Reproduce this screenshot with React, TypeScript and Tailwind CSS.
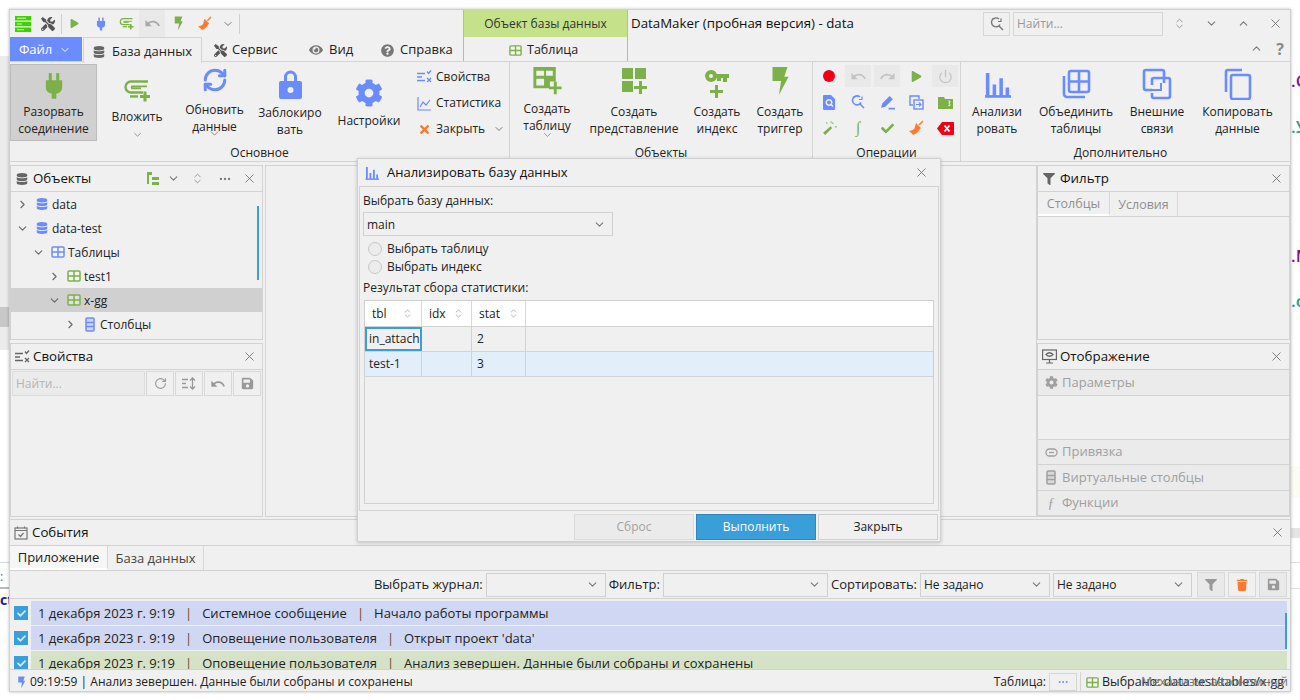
import type { ReactNode } from "react";
import { ChevronDown, ChevronRight, ChevronUp, ChevronsUpDown, MoreHorizontal, Power, RefreshCw, RotateCw, X } from "lucide-react";
import { MdRedo, MdUndo } from "react-icons/md";
import { FaCheck, FaCog, FaDatabase, FaEye, FaFilter, FaPlay, FaQuestionCircle, FaSave, FaTimes, FaTools, FaTrash } from "react-icons/fa";

const BLUE = "#6b8cff";
const GREEN = "#7cb049";
const ORANGE = "#ff7a2f";

function Plug({ size = 24, color = GREEN }: { size?: number; color?: string }) {
  return (
    <svg width={size} height={size} viewBox="0 0 24 24" fill={color}>
      <rect x="7.5" y="1" width="2.6" height="7" />
      <rect x="13.9" y="1" width="2.6" height="7" />
      <path d="M5 7h14v6c0 3-2 5-5 5.500V23h-4v-4.500C7 18 5 16 5 13z" />
    </svg>
  );
}

function Attach({ size = 28, color = GREEN }: { size?: number; color?: string }) {
  return (
    <svg width={size} height={size} viewBox="0 0 28 24" fill="none" stroke={color} strokeWidth="2.4">
      <path d="M25 3H8a5 5 0 0 0 0 11h12" />
      <path d="M24 8H9a1.500 1.500 0 0 0 0 2h9" strokeWidth="1.800" />
      <path d="M7 18h8" />
      <path d="M22 13v10M17 18h10" strokeWidth="3" />
    </svg>
  );
}

function Grid2({ size = 14, color = GREEN }: { size?: number; color?: string }) {
  return (
    <svg width={size} height={size} viewBox="0 0 14 14" fill="none" stroke={color} strokeWidth="1.500">
      <rect x="1" y="2" width="12" height="10" rx="1" fill="#fff" fillOpacity="0.35" />
      <path d="M1 7h12M7 2v10" />
    </svg>
  );
}

function TablePlus({ size = 32 }: { size?: number }) {
  return (
    <svg width={size} height={size} viewBox="0 0 30 30" fill={GREEN}>
      <path fillRule="evenodd" d="M1 1h23v15h-6v7H1zM4 5v5h8V5zm10 0v5h7V5zM4 13v7h8v-7z" />
      <path d="M22 16h3v5h5v3h-5v5h-3v-5h-5v-3h5z" />
    </svg>
  );
}

function ViewPlus({ size = 28 }: { size?: number }) {
  return (
    <svg width={size} height={size} viewBox="0 0 28 28" fill={GREEN}>
      <rect x="2" y="2" width="11" height="11" />
      <rect x="15" y="2" width="11" height="11" />
      <rect x="2" y="15" width="11" height="11" />
      <path d="M19 15h3v5h5v3h-5v5h-3v-5h-5v-3h5z" />
    </svg>
  );
}

function KeyPlus() {
  return (
    <svg width="26" height="30" viewBox="0 0 26 30" fill={GREEN}>
      <path fillRule="evenodd" d="M7 2a6 6 0 0 1 5.700 4H25v4h-2v4h-4v-4h-2v3h-4v-3h-.3A6 6 0 1 1 7 2zm0 4a2 2 0 1 0 0 4 2 2 0 0 0 0-4z" />
      <path d="M11 17h3v5h5v3h-5v5h-3v-5H6v-3h5z" />
    </svg>
  );
}

function Bolt({ size = 28, color = GREEN }: { size?: number; color?: string }) {
  return (
    <svg width={size} height={size} viewBox="0 0 20 28" fill={color}>
      <path d="M3 1h14l-3 9h4L9 27l2-13H3z" />
    </svg>
  );
}

function Broom({ size = 16 }: { size?: number }) {
  return (
    <svg width={size} height={size} viewBox="0 0 16 16" fill={ORANGE}>
      <path d="M11 5L15 1" stroke={ORANGE} strokeWidth="1.500" />
      <path d="M8 3l5 5-1.500 1.500c-1 2-3 4-6 5.500L1 11c2 0 4-1 5.500-2.500z" />
    </svg>
  );
}

function PropsIcon({ color = BLUE, size = 16 }: { color?: string; size?: number }) {
  return (
    <svg width={size} height={size} viewBox="0 0 16 16" fill="none" stroke={color} strokeWidth="1.300">
      <path d="M1 4.500h8M1 8h5M1 11.500h8" />
      <path d="M11 2.500l1.500 2 2.500-3M11 9l4 4M15 9l-4 4" />
    </svg>
  );
}

function StatsIcon() {
  return (
    <svg width="15" height="15" viewBox="0 0 15 15" fill="none" stroke={BLUE} strokeWidth="1.200">
      <path d="M1 1v13h13" />
      <path d="M3 11l3-5 3 3 4-5" />
    </svg>
  );
}

function Bars({ size = 26 }: { size?: number }) {
  return (
    <svg width={size} height={size} viewBox="0 0 26 26" fill="none" stroke={BLUE} strokeWidth="3.400">
      <path d="M1 24.500h25" strokeWidth="2.600" />
      <path d="M3.500 24V2M10 24V13M16.500 24V7M22.500 24V16" />
    </svg>
  );
}

function Merge() {
  return (
    <svg width="30" height="30" viewBox="0 0 30 30" fill="none" stroke={BLUE} strokeWidth="2.600">
      <path d="M3 7v18a3 3 0 0 0 3 3h18" />
      <rect x="8" y="2" width="20" height="21" rx="2" />
      <path d="M8 12.500h20M18 2v21" />
    </svg>
  );
}

function Links() {
  return (
    <svg width="30" height="32" viewBox="0 0 30 32" fill="none" stroke={BLUE} strokeWidth="2.600">
      <path d="M22 15V4a2 2 0 0 0-2-2H4a2 2 0 0 0-2 2v16a2 2 0 0 0 2 2h6" />
      <path d="M10 17v-5a2 2 0 0 1 2-2h14a2 2 0 0 1 2 2v16a2 2 0 0 1-2 2H12a2 2 0 0 1-2-2v-3" />
      <path d="M10 22h9v-7" strokeWidth="2" />
    </svg>
  );
}

function CopyIcon() {
  return (
    <svg width="28" height="32" viewBox="0 0 28 32" fill="none" stroke={BLUE} strokeWidth="2.600">
      <path d="M2 24V4a2 2 0 0 1 2-2h14" />
      <rect x="7" y="7" width="19" height="24" rx="2" />
    </svg>
  );
}

function LockIcon() {
  return (
    <svg width="23" height="30" viewBox="0 0 23 30" fill={BLUE}>
      <path d="M5 12V8a6.500 6.500 0 0 1 13 0v4h-3V8a3.500 3.500 0 0 0-7 0v4z" />
      <path fillRule="evenodd" d="M2 12h19a2 2 0 0 1 2 2v14a2 2 0 0 1-2 2H2a2 2 0 0 1-2-2V14a2 2 0 0 1 2-2zm9.500 6a3 3 0 1 0 0 6 3 3 0 0 0 0-6z" />
    </svg>
  );
}

function ColumnsIcon({ color = BLUE }: { color?: string }) {
  return (
    <svg width="10" height="15" viewBox="0 0 10 15" fill="none" stroke={color} strokeWidth="1.500">
      <rect x="1" y="1" width="8" height="13" rx="1" fill={color} fillOpacity="0.25" />
      <path d="M1 5.500h8M1 9.500h8" />
    </svg>
  );
}

function RBtn({ w, pt, mt, icon, lines, chevron, active }: { w: string; pt: string; mt: string; icon: ReactNode; lines: string[]; chevron?: string; active?: boolean }) {
  return (
    <div className={`${w} ${pt} h-[77px] shrink-0 flex flex-col items-center text-center ${active ? "bg-[#d0d0d0] border border-[#bcbcbc]" : ""}`}>
      {icon}
      <div className={`${mt} leading-[16.500px]`}>
        {lines.map((l) => (
          <div key={l}>{l}</div>
        ))}
      </div>
      {chevron && <ChevronDown size={13} strokeWidth={1.500} className={`${chevron} text-[#777]`} />}
    </div>
  );
}

function RGroup({ w, label, children, last }: { w: string; label: string; children: ReactNode; last?: boolean }) {
  return (
    <div className={`${w} shrink-0 h-full flex flex-col ${last ? "" : "border-r border-[#d4d4d4]"}`}>
      <div className="flex h-[84px] pt-[2px]">{children}</div>
      <div className="text-center leading-[16px]">{label}</div>
    </div>
  );
}

function SmallAction({ icon, label, chevron }: { icon: ReactNode; label: string; chevron?: boolean }) {
  return (
    <div className="h-[26px] flex items-center">
      <span className="w-[20px] flex justify-center">{icon}</span>
      <span className="ml-[2px]">{label}</span>
      {chevron && <ChevronDown size={12} className="ml-[8px] text-[#777]" />}
    </div>
  );
}

function OpIcon({ children, shaded }: { children: ReactNode; shaded?: boolean }) {
  return <div className={`w-[26px] h-[22px] flex items-center justify-center ${shaded ? "bg-[#e9e9e9]" : ""}`}>{children}</div>;
}

function PanelHead({ icon, title }: { icon: ReactNode; title: string }) {
  return (
    <div className="h-[26px] shrink-0 flex items-center border-b border-[#d2d2d2] pl-[3px] pr-[5px]">
      <span className="w-[16px] flex justify-center">{icon}</span>
      <span className="ml-[3px] text-[13.300px] text-[#111]">{title}</span>
      <X size={15} strokeWidth={1.300} className="ml-auto text-[#666]" />
    </div>
  );
}

function TreeRow({ indent, open, icon, label, selected }: { indent: string; open: boolean; icon: ReactNode; label: string; selected?: boolean }) {
  return (
    <div className={`h-[24px] flex items-center ${indent} ${selected ? "bg-[#d0d0d0]" : ""}`}>
      {open ? <ChevronDown size={13} className="text-[#666]" /> : <ChevronRight size={13} className="text-[#666]" />}
      <span className="ml-[5px] w-[16px] flex justify-center">{icon}</span>
      <span className="ml-[2px] pt-[2px]">{label}</span>
    </div>
  );
}

function ToolBtn({ children, tinted }: { children: ReactNode; tinted?: boolean }) {
  return <div className={`w-[28px] h-[25px] border border-[#d8d8d8] flex items-center justify-center ${tinted ? "bg-[#e9e9e9]" : ""}`}>{children}</div>;
}

function Select({ w, value }: { w: string; value?: string }) {
  return (
    <div className={`${w} h-[24px] shrink-0 border border-[#d0d0d0] flex items-center pl-[3px] pr-[6px]`}>
      <span className="pt-[1px]">{value}</span>
      <ChevronDown size={13} className="ml-auto text-[#777]" />
    </div>
  );
}

function AccordionRow({ icon, label, h }: { icon: ReactNode; label: string; h: string }) {
  return (
    <div className={`${h} bg-[#ebebeb] border-b border-[#d2d2d2] flex items-center pl-[5px] text-[13px] text-[#a0a0a0]`}>
      <span className="w-[16px] flex justify-center">{icon}</span>
      <span className="ml-[3px]">{label}</span>
    </div>
  );
}

function EventRow({ date, kind, text, bg, clip }: { date: string; kind: string; text: string; bg: string; clip?: boolean }) {
  return (
    <div className={`flex ${clip ? "h-[19px]" : "h-[24px] mb-[1px]"} overflow-hidden`}>
      <div className="w-[21px] shrink-0 pl-[4px] pt-[5px]">
        <div className="w-[14px] h-[14px] bg-[#3a9ed9] flex items-center justify-center">
          <FaCheck size={9} color="#cfe8f7" />
        </div>
      </div>
      <div className={`flex-1 ${bg} flex items-start pt-[3px] pl-[7px] leading-[18px] text-[13px]`}>
        <span>{date}</span>
        <span className="mx-[10px] text-[#6b4a1f]">|</span>
        <span>{kind}</span>
        <span className="mx-[10px] text-[#6b4a1f]">|</span>
        <span>{text}</span>
      </div>
    </div>
  );
}

function Radio({ label }: { label: string }) {
  return (
    <div className="h-[18px] flex items-center pl-[5px]">
      <span className="w-[14px] h-[14px] rounded-full border border-[#c8c8c8] bg-[#ececec]" />
      <span className="ml-[5px]">{label}</span>
    </div>
  );
}

function SortHead({ w, label, gap }: { w: string; label: string; gap: string }) {
  return (
    <div className={`${w} h-full shrink-0 border-r border-[#d8d8d8] flex items-center pl-[7px]`}>
      <span>{label}</span>
      <ChevronsUpDown size={11} strokeWidth={1.300} className={`${gap} text-[#888]`} />
    </div>
  );
}

function ResultRow({ first, stat, bg, focus }: { first: string; stat: string; bg: string; focus?: boolean }) {
  return (
    <div className={`h-[25px] flex border-b border-[#d0d4da] ${bg}`}>
      <div className={`w-[57px] shrink-0 flex items-center overflow-hidden whitespace-nowrap ${focus ? "border-2 border-[#3a9ed9] pl-[2px]" : "border-r border-[#d0d4da] pl-[4px]"}`}>{first}</div>
      <div className="w-[50px] shrink-0 border-r border-[#d0d4da]" />
      <div className="w-[54px] shrink-0 border-r border-[#d0d4da] flex items-center pl-[5px]">{stat}</div>
    </div>
  );
}

function Dialog() {
  return (
    <div className="absolute left-[357px] top-[158px] w-[584px] h-[384px] bg-[#f0f0f0] border border-[#d0d0d0] shadow-[0_1px_4px_rgba(0,0,0,0.2)] flex flex-col">
      <div className="h-[27px] shrink-0 flex items-center pl-[7px] pr-[11px] text-[#111]">
        <Bars size={14} />
        <span className="ml-[8px] text-[13px]">Анализировать базу данных</span>
        <X size={15} strokeWidth={1.300} className="ml-auto text-[#666]" />
      </div>
      <div className="h-[325px] mx-[1px] border border-[#d2d2d2] px-[3px] pt-[4px]">
        <div className="h-[21px] leading-[20px]">Выбрать базу данных:</div>
        <Select w="w-[250px]" value="main" />
        <div className="mt-[4px]">
          <Radio label="Выбрать таблицу" />
          <Radio label="Выбрать индекс" />
        </div>
        <div className="h-[21px] mt-[1px] leading-[21px]">Результат сбора статистики:</div>
        <div className="h-[204px] ml-[1px] mt-[2px] w-[570px] border border-[#d0d0d0]">
          <div className="h-[26px] bg-white flex border-b border-[#d0d0d0]">
            <SortHead w="w-[57px]" label="tbl" gap="ml-[15px]" />
            <SortHead w="w-[50px]" label="idx" gap="ml-[7px]" />
            <SortHead w="w-[54px]" label="stat" gap="ml-[8px]" />
          </div>
          <ResultRow first="in_attach" stat="2" bg="bg-[#f0f0f0]" focus />
          <ResultRow first="test-1" stat="3" bg="bg-[#e2eefa]" />
        </div>
      </div>
      <div className="flex-1 flex justify-end items-center gap-[2px] pr-[2px] pt-[2px]">
        <div className="w-[120px] h-[26px] bg-[#ebebeb] border border-[#dcdcdc] flex items-center justify-center text-[#a3a3a3]">Сброс</div>
        <div className="w-[120px] h-[26px] bg-[#3a9ed9] border border-[#2f86bb] flex items-center justify-center text-white">Выполнить</div>
        <div className="w-[120px] h-[26px] border border-[#d0d0d0] flex items-center justify-center">Закрыть</div>
      </div>
    </div>
  );
}

export default function App() {
  return (
    <div className="relative w-[1300px] h-[700px] bg-white overflow-hidden text-[12px] text-[#222] font-['Open_Sans','Liberation_Sans',sans-serif]">
      {/* what shows behind the app window */}
      <div className="absolute left-0 top-[56px] w-[9px] h-[294px] bg-[#ececec]" />
      <div className="absolute left-0 top-[307px] w-[9px] h-[20px] bg-[#c8c8c8]" />
      <div className="absolute left-0 top-[562px] w-[9px] h-[1px] bg-[#d8d8d8]" />
      <div className="absolute left-0 top-[570px] text-[12px] leading-[14px] text-[#3a6fd8]">:</div>
      <div className="absolute left-0 top-[587px] w-[9px] h-[2px] bg-[#b8b8c0]" />
      <div className="absolute left-0 top-[592px] text-[14px] leading-[16px] font-bold text-[#23238c]">ct</div>
      <div className="absolute left-[1291px] top-[72px] text-[17px] leading-[18px] font-semibold text-[#8a0f9e]">.C</div>
      <div className="absolute left-[1291px] top-[118px] text-[17px] leading-[18px] font-semibold text-[#12a596]">.У</div>
      <div className="absolute left-[1291px] top-[247px] text-[17px] leading-[18px] font-semibold text-[#8a0f9e]">.M</div>
      <div className="absolute left-[1291px] top-[292px] text-[17px] leading-[18px] font-semibold text-[#12a596]">.c</div>
      <div className="absolute left-[1291px] top-[466px] w-[9px] h-[32px] bg-[#fdfcf2]" />
      <div className="absolute left-[1291px] top-[528px] w-[9px] h-[10px] bg-[#e4e4e4]" />
      <div className="absolute left-[1291px] top-[562px] w-[9px] h-[1px] bg-[#e0e0e0]" />
      <div className="absolute left-[1291px] top-[588px] w-[9px] h-[1px] bg-[#e0e0e0]" />

      <div className="absolute left-[9px] top-[9px] w-[1282px] h-[683px] bg-[#f0f0f0] border border-[#d0d0d0] shadow-[0_0_3px_rgba(0,0,0,0.25)] flex flex-col">
        {/* title row */}
        <div className="h-[27px] shrink-0 flex items-center">
          <div className="w-[453px] flex items-center pl-[5px]">
            <svg width="16" height="16" viewBox="0 0 16 16" fill="#3fd000">
              <rect x="0" y="0" width="16" height="4.500" />
              <rect x="0" y="5.700" width="16" height="4.500" />
              <rect x="0" y="11.500" width="16" height="4.500" />
              <path d="M2 2.200h9M2 8h5M2 13.700h7" stroke="#d6f7c4" strokeWidth="1" />
            </svg>
            <FaTools size={14} color="#555" className="ml-[10px]" />
            <span className="ml-[6px] w-px h-[20px] bg-[#cfcfcf]" />
            <FaPlay size={9} color={GREEN} className="ml-[8px]" />
            <span className="ml-[15px]"><Plug size={14} color={BLUE} /></span>
            <span className="ml-[11px]"><Attach size={15} /></span>
            <span className="ml-[5px] w-[26px] h-[27px] bg-[#e9e9e9] flex items-center justify-center"><MdUndo size={17} color="#a8a8a8" /></span>
            <span className="ml-[6px]"><Bolt size={15} /></span>
            <span className="ml-[11px]"><Broom size={15} /></span>
            <ChevronDown size={12} className="ml-[10px] text-[#777]" />
            <span className="ml-[5px] w-px h-[20px] bg-[#cfcfcf]" />
          </div>
          <div className="w-[165px] h-full bg-[#c5e18a] border-x border-[#a4d35c] flex items-center justify-center text-[#333]">Объект базы данных</div>
          <div className="ml-[3px] w-[352px] text-[13.300px] text-[#111]">DataMaker (пробная версия) - data</div>
          <div className="w-[27px] h-[24px] border border-[#d6d6d6] flex items-center justify-center">
            <svg width="14" height="14" viewBox="0 0 14 14" fill="none" stroke="#777" strokeWidth="1.400">
              <path d="M9 2a4.500 4.500 0 1 0 1 5.500M2 2.500a4 4 0 0 1 3-1M9 9l4 4" />
              <path d="M8 4.500h3v-3" strokeWidth="1.200" />
            </svg>
          </div>
          <div className="ml-[3px] w-[150px] h-[24px] border border-[#d6d6d6] flex items-center pl-[3px] text-[#999]">Найти...</div>
          <ChevronsUpDown size={13} strokeWidth={1.300} className="ml-[10px] text-[#777]" />
          <ChevronDown size={13} className="ml-[19px] text-[#777]" />
          <ChevronUp size={13} className="ml-[19px] text-[#777]" />
          <X size={15} strokeWidth={1.300} className="ml-[18px] text-[#666]" />
        </div>

        {/* ribbon tabs */}
        <div className="h-[25px] shrink-0 flex items-stretch border-b border-[#d4d4d4] text-[13px]">
          <div className="w-[72px] bg-[#6b8cff] flex items-center pl-[9px] pt-[2px] text-white">
            Файл
            <ChevronDown size={12} className="ml-[7px]" />
          </div>
          <div className="ml-[1px] w-[119px] h-[26px] bg-[#f0f0f0] border border-b-0 border-[#d4d4d4] flex items-center pl-[9px] pt-[2px]">
            <FaDatabase size={12} color="#666" />
            <span className="ml-[7px]">База данных</span>
          </div>
          <div className="w-[96px] flex items-center pl-[12px] pt-[2px]">
            <FaTools size={13} color="#555" />
            <span className="ml-[5px]">Сервис</span>
          </div>
          <div className="w-[72px] flex items-center pl-[11px] pt-[2px]">
            <FaEye size={14} color="#777" />
            <span className="ml-[6px]">Вид</span>
          </div>
          <div className="w-[93px] flex items-center pl-[11px] pt-[2px]">
            <FaQuestionCircle size={13} color="#777" />
            <span className="ml-[6px]">Справка</span>
          </div>
          <div className="w-[165px] border-x border-[#a4d35c] flex items-center pl-[45px] pt-[2px] text-[12.500px]">
            <Grid2 size={13} />
            <span className="ml-[5px]">Таблица</span>
          </div>
          <ChevronUp size={13} className="ml-auto mt-[5px] text-[#777]" />
          <span className="ml-[13px] mr-[6px] mt-[1px] text-[16px] leading-[22px] font-bold text-[#8a8a8a]">?</span>
        </div>

        {/* ribbon */}
        <div className="h-[100px] shrink-0 flex items-stretch border-b border-[#d4d4d4]">
          <RGroup w="w-[500px]" label="Основное">
            <RBtn w="w-[87px]" pt="pt-[7px]" mt="mt-[4px]" active icon={<Plug size={28} />} lines={["Разорвать", "соединение"]} />
            <RBtn w="w-[80px]" pt="pt-[14px]" mt="mt-[6px]" icon={<Attach size={28} />} lines={["Вложить"]} chevron="mt-[4px]" />
            <RBtn w="w-[75px]" pt="pt-[3px]" mt="mt-[9px]" icon={<RefreshCw size={26} color={BLUE} strokeWidth={2.800} />} lines={["Обновить", "данные"]} chevron="-mt-[8px]" />
            <RBtn w="w-[76px]" pt="pt-[5px]" mt="mt-[6px]" icon={<LockIcon />} lines={["Заблокиро", "вать"]} />
            <RBtn w="w-[82px]" pt="pt-[15px]" mt="mt-[6px]" icon={<FaCog size={28} color={BLUE} />} lines={["Настройки"]} />
            <div className="pl-[4px]">
              <SmallAction icon={<PropsIcon />} label="Свойства" />
              <SmallAction icon={<StatsIcon />} label="Статистика" />
              <SmallAction icon={<FaTimes size={13} color={ORANGE} />} label="Закрыть" chevron />
            </div>
          </RGroup>
          <RGroup w="w-[303px]" label="Объекты">
            <RBtn w="w-[74px]" pt="pt-[2px]" mt="mt-[6px]" icon={<TablePlus />} lines={["Создать", "таблицу"]} chevron="-mt-[5px]" />
            <RBtn w="w-[100px]" pt="pt-[2px]" mt="mt-[10px]" icon={<ViewPlus />} lines={["Создать", "представление"]} />
            <RBtn w="w-[66px]" pt="pt-[4px]" mt="mt-[6px]" icon={<KeyPlus />} lines={["Создать", "индекс"]} />
            <RBtn w="w-[60px]" pt="pt-[2px]" mt="mt-[8px]" icon={<Bolt size={30} />} lines={["Создать", "триггер"]} />
          </RGroup>
          <RGroup w="w-[148px]" label="Операции">
            <div className="grid grid-cols-[repeat(5,26px)] gap-x-[3px] gap-y-[4px] pl-[3px] pt-[1px] content-start">
              <OpIcon><span className="w-[12px] h-[12px] rounded-full bg-[#f00014]" /></OpIcon>
              <OpIcon shaded><MdUndo size={17} color="#c4c4c4" /></OpIcon>
              <OpIcon shaded><MdRedo size={17} color="#c4c4c4" /></OpIcon>
              <OpIcon><FaPlay size={11} color={GREEN} /></OpIcon>
              <OpIcon shaded><Power size={15} color="#c4c4c4" /></OpIcon>
              <OpIcon>
                <svg width="12" height="15" viewBox="0 0 12 15" fill={BLUE}>
                  <path fillRule="evenodd" d="M0 1a1 1 0 0 1 1-1h7l4 4v10a1 1 0 0 1-1 1H1a1 1 0 0 1-1-1zm6 3a3.500 3.500 0 1 0 2 6.400l1.500 1.500 1-1L9 9.300A3.500 3.500 0 0 0 6 4zm0 1.500a2 2 0 1 1 0 4 2 2 0 0 1 0-4z" />
                </svg>
              </OpIcon>
              <OpIcon>
                <svg width="14" height="14" viewBox="0 0 14 14" fill="none" stroke={BLUE} strokeWidth="1.600">
                  <path d="M9 2a4.500 4.500 0 1 0 1 5.500M2 2.500a4 4 0 0 1 3-1M9 9l4 4" />
                  <path d="M8 4.500h3v-3" strokeWidth="1.200" />
                </svg>
              </OpIcon>
              <OpIcon>
                <svg width="15" height="15" viewBox="0 0 14 14" fill={BLUE}>
                  <path d="M9 1l3 3-7 7-4 1 1-4zM8 12h6v1.500H8z" />
                </svg>
              </OpIcon>
              <OpIcon>
                <svg width="15" height="15" viewBox="0 0 15 15" fill="none" stroke={BLUE} strokeWidth="1.400">
                  <path d="M4 10H1V1h9v3" />
                  <rect x="5" y="5" width="9" height="9" />
                  <path d="M7 9.500h5M10 7.500l2 2-2 2" strokeWidth="1.100" />
                </svg>
              </OpIcon>
              <OpIcon>
                <svg width="15" height="13" viewBox="0 0 15 13" fill={GREEN}>
                  <path d="M0 1h6l1 2h8v10H0z" />
                  <path d="M10 5h2v1.500h-1V8h1v1.500h-2" stroke="#fff" strokeWidth="0.700" fill="none" />
                </svg>
              </OpIcon>
              <OpIcon>
                <svg width="15" height="15" viewBox="0 0 14 14" fill={GREEN}>
                  <path d="M8 5l1.500 1.500L3 13l-2-2z" />
                  <path d="M4 1h1v2H4zM10 1l1 1-1 1-1-1zM12 5h2v1h-2zM8 0h1v2H8z" fillOpacity="0.7" />
                </svg>
              </OpIcon>
              <OpIcon><span className="italic text-[16px] leading-[16px] text-[#7cb049] font-['Liberation_Serif',serif]">∫</span></OpIcon>
              <OpIcon><FaCheck size={13} color={GREEN} /></OpIcon>
              <OpIcon><Broom size={16} /></OpIcon>
              <OpIcon>
                <svg width="17" height="13" viewBox="0 0 17 13" fill="#f00014">
                  <path d="M5 0h11a1 1 0 0 1 1 1v11a1 1 0 0 1-1 1H5L0 6.500z" />
                  <path d="M7.500 3.500l5 6M12.500 3.500l-5 6" stroke="#fff" strokeWidth="1.800" />
                </svg>
              </OpIcon>
            </div>
          </RGroup>
          <RGroup w="w-[319px]" last label="Дополнительно">
            <RBtn w="w-[72px]" pt="pt-[7px]" mt="mt-[6px]" icon={<Bars size={27} />} lines={["Анализи", "ровать"]} />
            <RBtn w="w-[86px]" pt="pt-[5px]" mt="mt-[5px]" icon={<Merge />} lines={["Объединить", "таблицы"]} />
            <RBtn w="w-[76px]" pt="pt-[4px]" mt="mt-[4px]" icon={<Links />} lines={["Внешние", "связи"]} />
            <RBtn w="w-[85px]" pt="pt-[4px]" mt="mt-[4px]" icon={<CopyIcon />} lines={["Копировать", "данные"]} />
          </RGroup>
        </div>

        {/* docked panels */}
        <div className="h-[357px] shrink-0 flex pt-[3px]">
          <div className="w-[253px] shrink-0 flex flex-col gap-[3px]">
            <div className="h-[175px] border border-[#d2d2d2] flex flex-col relative">
              <div className="h-[26px] shrink-0 flex items-center border-b border-[#d2d2d2] pl-[3px] pr-[5px]">
                <span className="w-[16px] flex justify-center"><FaDatabase size={12} color="#666" /></span>
                <span className="ml-[3px] text-[13.300px] text-[#111]">Объекты</span>
                <svg width="13" height="13" viewBox="0 0 13 13" fill={GREEN} className="ml-auto">
                  <rect x="0" y="0" width="5" height="3" />
                  <rect x="0" y="0" width="2" height="12" />
                  <rect x="5" y="5" width="7" height="3" />
                  <rect x="5" y="10" width="7" height="3" />
                </svg>
                <ChevronDown size={13} className="ml-[7px] text-[#777]" />
                <ChevronsUpDown size={13} strokeWidth={1.300} className="ml-[11px] text-[#777]" />
                <MoreHorizontal size={14} className="ml-[14px] text-[#777]" />
                <X size={15} strokeWidth={1.300} className="ml-[10px] text-[#666]" />
              </div>
              <div>
                <TreeRow indent="pl-[5px]" open={false} icon={<FaDatabase size={12} color={BLUE} />} label="data" />
                <TreeRow indent="pl-[5px]" open icon={<FaDatabase size={12} color={BLUE} />} label="data-test" />
                <TreeRow indent="pl-[21px]" open icon={<Grid2 color={BLUE} />} label="Таблицы" />
                <TreeRow indent="pl-[37px]" open={false} icon={<Grid2 />} label="test1" />
                <TreeRow indent="pl-[37px]" open icon={<Grid2 />} label="x-gg" selected />
                <TreeRow indent="pl-[53px]" open={false} icon={<ColumnsIcon />} label="Столбцы" />
              </div>
              {/* scroll indicator */}
              <div className="absolute left-[246px] top-[40px] w-[2px] h-[74px] bg-[#3a9ed9]" />
            </div>
            <div className="h-[174px] border border-[#d2d2d2] flex flex-col">
              <PanelHead icon={<PropsIcon color="#666" />} title="Свойства" />
              <div className="flex gap-[1px] pl-[1px] pt-[1px]">
                <div className="w-[133px] h-[25px] bg-[#ebebeb] border border-[#dcdcdc] flex items-center pl-[3px] text-[#b5b5b5]">Найти...</div>
                <ToolBtn><RotateCw size={13} color="#999" /></ToolBtn>
                <ToolBtn>
                  <svg width="14" height="13" viewBox="0 0 14 13" fill="none" stroke="#999" strokeWidth="1.300">
                    <path d="M0 2.500h6M0 6.500h4M0 10.500h6M10.500 1v11M8 3.500l2.500-2.500 2.500 2.500M8 9.500l2.500 2.500 2.500-2.500" />
                  </svg>
                </ToolBtn>
                <ToolBtn><MdUndo size={16} color="#999" /></ToolBtn>
                <ToolBtn><FaSave size={13} color="#999" /></ToolBtn>
              </div>
            </div>
          </div>
          <div className="ml-[2px] w-[772px] shrink-0 h-[352px] border border-[#d2d2d2]" />
          <div className="w-[253px] shrink-0 flex flex-col gap-[3px]">
            <div className="h-[175px] border border-[#d2d2d2] flex flex-col">
              <PanelHead icon={<FaFilter size={12} color="#666" />} title="Фильтр" />
              <div className="h-[25px] shrink-0 flex border-b border-[#d2d2d2] text-[12.500px] text-[#8f8f8f]">
                <div className="w-[72px] border-r border-[#d8d8d8] flex items-center justify-center pt-[2px] border-b-2 border-b-white">Столбцы</div>
                <div className="w-[68px] border-r border-[#d8d8d8] flex items-center justify-center pt-[2px]">Условия</div>
              </div>
            </div>
            <div className="h-[174px] border border-[#d2d2d2] flex flex-col">
              <PanelHead
                icon={
                  <svg width="15" height="15" viewBox="0 0 15 15" fill="none" stroke="#666" strokeWidth="1.200">
                    <rect x="0.600" y="1" width="13.800" height="9.500" />
                    <path d="M7.500 11v2.500M4 14h7M4 5.500q3.500-3.500 7 0q-3.500 3.500-7 0z" />
                  </svg>
                }
                title="Отображение"
              />
              <AccordionRow h="h-[26px]" icon={<FaCog size={13} color="#a0a0a0" />} label="Параметры" />
              <div className="h-[44px] border-b border-[#d2d2d2]" />
              <AccordionRow h="h-[25px]" icon={<svg width="13" height="9" viewBox="0 0 13 9" fill="none" stroke="#a0a0a0" strokeWidth="1.300"><rect x="1" y="1" width="11" height="7" rx="3.500" /><path d="M4 4.500h5" /></svg>} label="Привязка" />
              <AccordionRow h="h-[26px]" icon={<ColumnsIcon color="#a0a0a0" />} label="Виртуальные столбцы" />
              <AccordionRow h="h-[25px]" icon={<span className="italic font-['Liberation_Serif',serif] text-[14px]">ƒ</span>} label="Функции" />
            </div>
          </div>
        </div>

        {/* events */}
        <div className="h-[151px] shrink-0 border-y border-[#d2d2d2] flex flex-col">
          <PanelHead
            icon={
              <svg width="14" height="14" viewBox="0 0 14 14" fill="none" stroke="#777" strokeWidth="1.200">
                <rect x="1" y="2" width="12" height="11" />
                <path d="M1 4.500h12M3.500 0.500v2M10.500 0.500v2M4.500 8.500l2 2 3-3.500" />
              </svg>
            }
            title="События"
          />
          <div className="h-[25px] shrink-0 flex border-b border-[#d2d2d2] text-[13px]">
            <div className="w-[98px] bg-[#f6f6f6] flex items-center justify-center pt-[2px] border-r border-[#d8d8d8] border-b-2 border-b-white">Приложение</div>
            <div className="w-[96px] border-r border-[#d8d8d8] flex items-center justify-center pt-[2px] text-[#444]">База данных</div>
          </div>
          <div className="h-[28px] shrink-0 flex items-center justify-end gap-[3px] border-b border-[#d2d2d2] pr-[3px]">
            <span className="text-[13px] pt-[1px]">Выбрать журнал:</span>
            <Select w="w-[120px]" />
            <span className="text-[13px] pt-[1px]">Фильтр:</span>
            <Select w="w-[165px]" />
            <span className="text-[13px] pt-[1px]">Сортировать:</span>
            <Select w="w-[130px]" value="Не задано" />
            <Select w="w-[139px]" value="Не задано" />
            <span className="w-0 -mr-[1px]" />
            <ToolBtn tinted><FaFilter size={12} color="#999" /></ToolBtn>
            <ToolBtn><FaTrash size={12} color={ORANGE} /></ToolBtn>
            <ToolBtn tinted><FaSave size={13} color="#999" /></ToolBtn>
          </div>
          <div className="flex-1 overflow-hidden relative pt-[2px] pr-[3px]">
            <EventRow date="1 декабря 2023 г. 9:19" kind="Системное сообщение" text="Начало работы программы" bg="bg-[#d0d7f3]" />
            <EventRow date="1 декабря 2023 г. 9:19" kind="Оповещение пользователя" text="Открыт проект 'data'" bg="bg-[#d0d7f3]" />
            <EventRow clip date="1 декабря 2023 г. 9:19" kind="Оповещение пользователя" text="Анализ зевершен. Данные были собраны и сохранены" bg="bg-[#d6e2c8]" />
            <div className="absolute right-[3px] top-[14px] w-[2px] h-[36px] bg-[#3a9ed9]" />
          </div>
        </div>

        {/* status bar */}
        <div className="flex-1 flex items-center pl-[5px] pr-[2px] pt-[2px]">
          <Bolt size={13} color={BLUE} />
          <span className="ml-[2px]">09:19:59 | Анализ зевершен. Данные были собраны и сохранены</span>
          <span className="ml-auto">Таблица:</span>
          <div className="ml-[3px] w-[28px] h-[18px] border border-[#d6d6d6] flex items-center justify-center">
            <MoreHorizontal size={12} color={BLUE} />
          </div>
          <span className="ml-[3px] w-px h-[20px] bg-[#d4d4d4]" />
          <span className="ml-[5px]"><Grid2 size={13} /></span>
          <div className="relative ml-[3px] w-[186px] text-[12.500px] whitespace-nowrap overflow-hidden">
            <span>Выбрано: data-test/tables/x-gg</span>
            <span className="absolute right-0 top-0 text-[#777]">Механизм: автономный</span>
          </div>
        </div>
      </div>

      <Dialog />
    </div>
  );
}
